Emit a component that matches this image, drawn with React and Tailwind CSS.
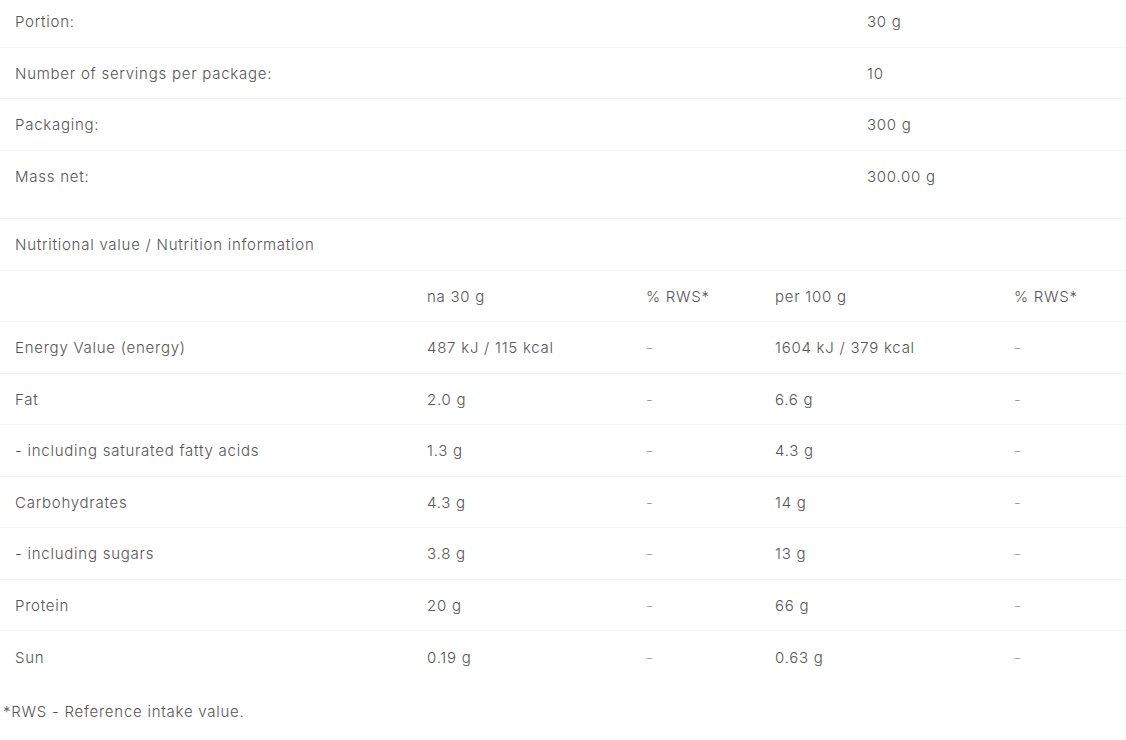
import React from "react";

const top = [
  ["Portion:", "30 g"],
  ["Number of servings per package:", "10"],
  ["Packaging:", "300 g"],
  ["Mass net:", "300.00 g"],
];

const rows = [
  ["Energy Value (energy)", "487 kJ / 115 kcal", "-", "1604 kJ / 379 kcal", "-"],
  ["Fat", "2.0 g", "-", "6.6 g", "-"],
  ["- including saturated fatty acids", "1.3 g", "-", "4.3 g", "-"],
  ["Carbohydrates", "4.3 g", "-", "14 g", "-"],
  ["- including sugars", "3.8 g", "-", "13 g", "-"],
  ["Protein", "20 g", "-", "66 g", "-"],
  ["Sun", "0.19 g", "-", "0.63 g", "-"],
];

const grid = "grid grid-cols-[413px_219px_129px_239px_126px]";

export default function App() {
  return (
    <div
      className="w-[1126px] bg-white text-[#555555] font-light text-[15px] tracking-[0.05em] overflow-hidden h-[740px]"
      style={{ fontFamily: "Inter, 'Noto Sans', sans-serif" }}
    >
      <div className="-mt-[4px]">
        {top.map(([a, b], i) => (
          <div
            key={a}
            className={`grid grid-cols-[853px_273px] h-[51.5px] pt-[2px] items-center ${i < 3 ? "border-b border-[#f3f3f3]" : ""}`}
          >
            <div className="pl-[15px]">{a}</div>
            <div className="pl-[14px]">{b}</div>
          </div>
        ))}
      </div>
      <div className="mt-[16px] border-t border-[#f3f3f3]">
        <div className="h-[51.5px] pt-[2px] flex items-center pl-[15px] border-b border-[#f3f3f3]">
          Nutritional value / Nutrition information
        </div>
        <div className={`${grid} h-[51.5px] pt-[2px] items-center border-b border-[#f3f3f3]`}>
          <div></div>
          <div className="pl-[14px]">na 30 g</div>
          <div className="pl-[14px]">% RWS*</div>
          <div className="pl-[14px]">per 100 g</div>
          <div className="pl-[14px]">% RWS*</div>
        </div>
        {rows.map((r, i) => (
          <div
            key={r[0]}
            className={`${grid} h-[51.5px] pt-[2px] items-center ${i < rows.length - 1 ? "border-b border-[#f3f3f3]" : ""}`}
          >
            <div className="pl-[15px]">{r[0]}</div>
            <div className="pl-[14px]">{r[1]}</div>
            <div className="pl-[14px] text-[#999999]">{r[2]}</div>
            <div className="pl-[14px]">{r[3]}</div>
            <div className="pl-[14px] text-[#999999]">{r[4]}</div>
          </div>
        ))}
      </div>
      <div className="pl-[3px] pt-[18px]">*RWS - Reference intake value.</div>
    </div>
  );
}
